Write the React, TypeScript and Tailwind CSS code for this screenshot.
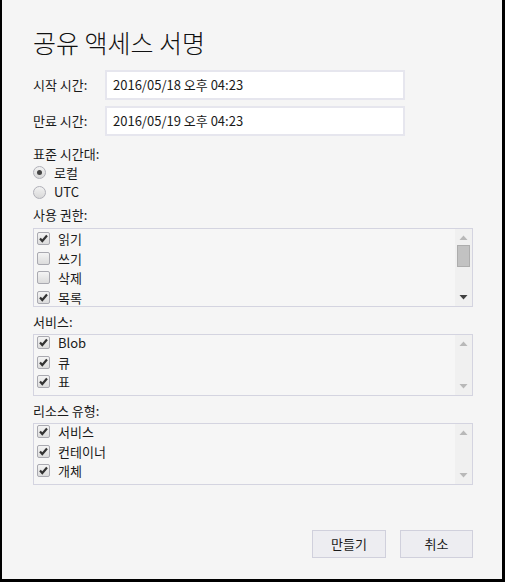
import React from "react";

const font = { fontFamily: '"Noto Sans CJK KR", "Noto Sans", sans-serif' };

function Check({ checked }: { checked: boolean }) {
  return (
    <span className="w-[13px] h-[13px] rounded-[2px] border border-[#a9a9b0] bg-gradient-to-b from-[#f4f4f4] to-[#dcdcdc] flex items-center justify-center shrink-0">
      {checked && (
        <svg width="11" height="11" viewBox="0 0 11 11">
          <path d="M2 5.5 L4.3 8 L9 2.5" fill="none" stroke="#333" strokeWidth="2.2" />
        </svg>
      )}
    </span>
  );
}

function Radio({ checked }: { checked: boolean }) {
  return (
    <span className="w-[13px] h-[13px] rounded-full border border-[#b0b0b8] bg-gradient-to-b from-[#f2f2f2] to-[#d8d8d8] flex items-center justify-center shrink-0">
      {checked && <span className="w-[5px] h-[5px] rounded-full bg-[#444]" />}
    </span>
  );
}

function Arrow({ up, dark }: { up: boolean; dark?: boolean }) {
  return (
    <svg width="9" height="5" viewBox="0 0 9 5">
      <path d={up ? "M0.5 5 L4.5 0.5 L8.5 5 Z" : "M0.5 0 L4.5 4.5 L8.5 0 Z"} fill={dark ? "#404040" : "#b8b8b8"} />
    </svg>
  );
}

function ListBox({
  items,
  thumb,
  h,
  shift,
}: {
  items: [string, boolean][];
  thumb?: boolean;
  h: string;
  shift?: boolean;
}) {
  return (
    <div className={`flex border border-[#d4d4e0] bg-[#f6f6f6] w-[440px] ${h}`}>
      <div className={`flex-1 flex flex-col ${shift ? "-mt-[2px]" : ""}`}>
        {items.map(([t, c]) => (
          <div key={t} className={`${shift ? "h-[19.5px]" : "h-[19.7px]"} flex items-center gap-[8px] pl-[3px] text-[13px] text-[#1a1a1a]`}>
            <Check checked={c} />
            <span>{t}</span>
          </div>
        ))}
      </div>
      <div className="w-[17px] bg-[#f0f0f0] flex flex-col items-center justify-between py-[6px]">
        <Arrow up />
        {thumb && <div className="w-[13px] h-[22px] bg-[#c2c2c2] border border-[#adadad] mb-auto mt-[5px]" />}
        <Arrow up={false} dark={thumb} />
      </div>
    </div>
  );
}

export default function App() {
  return (
    <div
      style={font}
      className="w-[505px] h-[582px] bg-[#f5f5f5] border-l-2 border-r-[3px] border-b-[3px] border-black flex flex-col pl-[31px] text-[13px] text-[#1a1a1a]"
    >
      <div className="h-[30px] mt-[27px] text-[25px] leading-[30px] font-light text-[#111]">공유 액세스 서명</div>
      <div className="flex items-center mt-[13px] h-[30px]">
        <span className="w-[72px]">시작 시간:</span>
        <div className="w-[300px] h-[30px] bg-white border-2 border-[#e6e6ee] flex items-center pl-[6px]">2016/05/18 오후 04:23</div>
      </div>
      <div className="flex items-center mt-[6px] h-[30px]">
        <span className="w-[72px]">만료 시간:</span>
        <div className="w-[300px] h-[30px] bg-white border-2 border-[#e6e6ee] flex items-center pl-[6px]">2016/05/19 오후 04:23</div>
      </div>
      <div className="h-[18px] mt-[9px] flex items-center">표준 시간대:</div>
      <div className="h-[19px] flex items-center gap-[8px]">
        <Radio checked />
        <span>로컬</span>
      </div>
      <div className="h-[20px] flex items-center gap-[8px]">
        <Radio checked={false} />
        <span>UTC</span>
      </div>
      <div className="h-[18px] mt-[4px] flex items-center">사용 권한:</div>
      <div className="mt-[4px]">
        <ListBox
          h="h-[79px]"
          thumb
          items={[
            ["읽기", true],
            ["쓰기", false],
            ["삭제", false],
            ["목록", true],
          ]}
        />
      </div>
      <div className="h-[18px] mt-[6px] flex items-center">서비스:</div>
      <div className="mt-[3px]">
        <ListBox
          h="h-[62px]"
          shift
          items={[
            ["Blob", true],
            ["큐", true],
            ["표", true],
          ]}
        />
      </div>
      <div className="h-[18px] mt-[6px] flex items-center">리소스 유형:</div>
      <div className="mt-[3px]">
        <ListBox
          h="h-[62px]"
          shift
          items={[
            ["서비스", true],
            ["컨테이너", true],
            ["개체", true],
          ]}
        />
      </div>
      <div className="flex justify-end gap-[14px] w-[440px] mt-[45px]">
        <button className="w-[74px] h-[28px] bg-[#ededf1] border border-[#d0d0dc] text-[13px]">만들기</button>
        <button className="w-[73px] h-[28px] bg-[#ededf1] border border-[#d0d0dc] text-[13px]">취소</button>
      </div>
    </div>
  );
}
